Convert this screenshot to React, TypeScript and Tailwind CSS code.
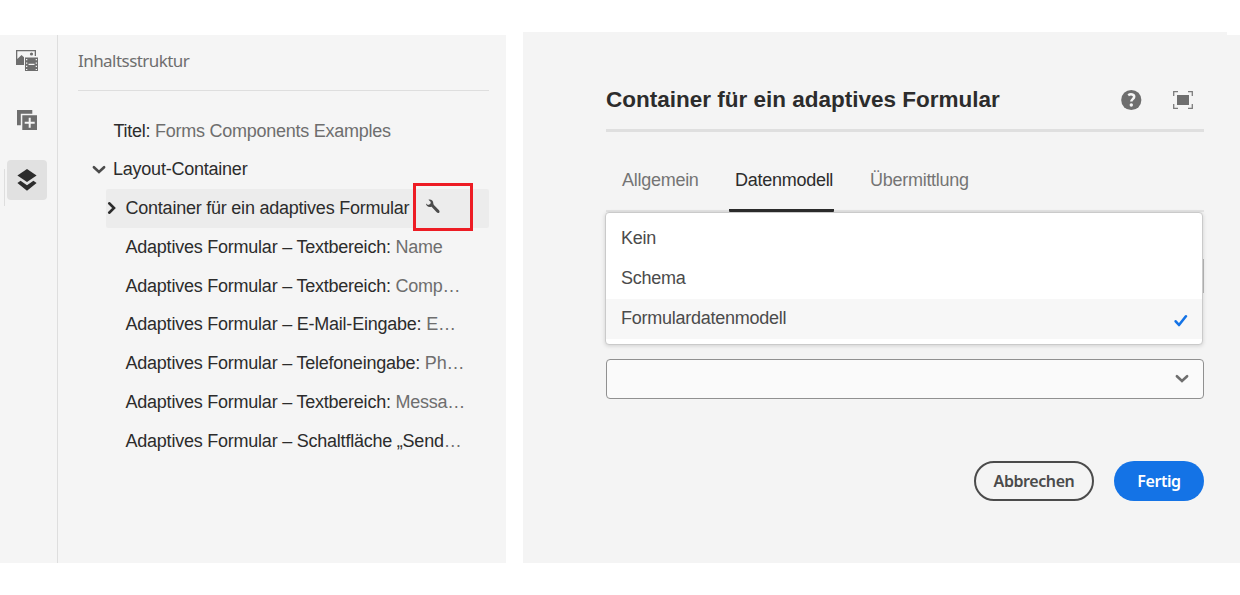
import React from "react";

type TreeItem = { label: string; value?: string; tail?: string };

const fields: TreeItem[] = [
  { label: "Adaptives Formular – Textbereich:", value: "Name" },
  { label: "Adaptives Formular – Textbereich:", value: "Comp…" },
  { label: "Adaptives Formular – E-Mail-Eingabe:", value: "E…" },
  { label: "Adaptives Formular – Telefoneingabe:", value: "Ph…" },
  { label: "Adaptives Formular – Textbereich:", value: "Messa…" },
  { label: "Adaptives Formular – Schaltfläche „Send", tail: "…" },
];

function AssetsIcon() {
  return (
    <svg width="24" height="24" viewBox="0 0 24 24" fill="#6e6e6e">
      <path d="M1 1h20v6h-1.300V2.300H2.300V10l4.200-4L9 8.200V16H1z" />
      <circle cx="16.500" cy="5" r="1.600" />
      <path fillRule="evenodd" d="M10 8.500h13V22H10zM11 10v1.300h1.300V10zm0 3.500v1.300h1.300v-1.300zm0 3.300v1.300h1.300v-1.300zm0 3.100v1.200h1.300v-1.200zM20.700 10v1.300H22V10zm0 3.500v1.300H22v-1.300zm0 3.300v1.300H22v-1.300zm0 3.100v1.200H22v-1.200zM13.500 14.700v1.200h6v-1.200z" />
    </svg>
  );
}

function ComponentsIcon() {
  return (
    <svg width="22" height="22" viewBox="0 0 22 22" fill="#6e6e6e">
      <path d="M1 1h15.300v3.800H4.800v11.500H1z" />
      <path fillRule="evenodd" d="M6.300 6.300H21V21H6.300zM12.700 8.800v4h-4v2h4v4h2v-4h4v-2h-4v-4z" />
    </svg>
  );
}

function LayersIcon() {
  return (
    <svg width="22" height="24" viewBox="0 0 22 24" fill="#2c2c2c">
      <path d="M11 1l9.600 6.500L11 14 1.400 7.500z" />
      <path d="M4.600 12.700L11 17.200l6.400-4.500 3.200 2.400L11 22.800 1.400 15.100z" />
    </svg>
  );
}

function Chevron({ right, color }: { right?: boolean; color: string }) {
  return right ? (
    <svg className="mb-[2px]" width="10" height="14" viewBox="0 0 10 14" fill="none" stroke={color} strokeWidth="2.600" strokeLinecap="round">
      <path d="M2.200 2.300L7 7l-4.800 4.700" />
    </svg>
  ) : (
    <svg width="14" height="10" viewBox="0 0 14 10" fill="none" stroke={color} strokeWidth="2.600" strokeLinecap="round">
      <path d="M1.900 2.200L7 7l5.100-4.800" />
    </svg>
  );
}

function Wrench() {
  return (
    <svg width="16" height="16" viewBox="0 0 16 16" fill="#4b4b4b">
      <path d="M3.500.7C6.200.2 8.400 1.800 8.300 4.300c0 .7.100 1 .6 1.600l4.900 5.100c1 1.200.9 2.200.3 2.700-.7.600-1.600.5-2.400-.4L7 8.300c-.4-.4-.7-.5-1.300-.4C3.100 8.300 1.200 6.800 1 4.400l2 1.500 2.300-.8.500-2z" />
    </svg>
  );
}

function HelpIcon() {
  return (
    <svg width="22" height="22" viewBox="0 0 22 22">
      <circle cx="11.300" cy="11" r="10.100" fill="#6e6e6e" />
      <path d="M8.200 6.200c2.500-1.700 6.100-.9 6 1.600 0 2.200-2.900 2.500-2.900 4.800" fill="none" stroke="#f5f5f5" strokeWidth="2.500" />
      <circle cx="11.300" cy="16" r="1.700" fill="#f5f5f5" />
    </svg>
  );
}

function FullscreenIcon() {
  return (
    <svg width="22" height="20" viewBox="0 0 22 20">
      <path d="M1.700 6V1.700H6M16 1.700h4.300V6M20.300 14v4.300H16M6 18.300H1.700V14" fill="none" stroke="#7c7c7c" strokeWidth="1.300" />
      <path d="M5 5h12v10H5z" fill="#6e6e6e" />
    </svg>
  );
}

function Rail() {
  return (
    <nav className="relative flex w-[58px] shrink-0 flex-col items-center border-r border-[#dedede] pr-[3px]">
      <button className="mt-[14px] flex h-6 w-6"><AssetsIcon /></button>
      <button className="mt-9 flex h-[22px] w-[22px]"><ComponentsIcon /></button>
      <button className="mt-[29px] flex h-10 w-10 items-center justify-center rounded-[4px] bg-[#e1e1e1]"><LayersIcon /></button>
      <span className="absolute left-1 top-[134px] h-[37px] w-px bg-[#dedede]" />
    </nav>
  );
}

function Tree() {
  return (
    <section className="flex w-[448px] flex-col pl-5 pr-[17px]">
      <h2 className="flex h-[56px] items-center border-b border-[#dedede] pb-1 font-['Noto_Sans',sans-serif] text-[17px] tracking-[-0.550px] text-[#6e6e6e]">
        Inhaltsstruktur
      </h2>
      <div className="mt-5 flex flex-col whitespace-pre text-[18px] leading-[39px] tracking-[-0.230px] text-[#2c2c2c]">
        <div className="flex h-[39px] pl-[35.500px] pt-px tracking-[-0.260px]">
          <span>Titel: </span><span className="text-[#6e6e6e]">Forms Components Examples</span>
        </div>
        <div className="flex h-[39px] items-center pl-[14px]">
          <Chevron color="#4b4b4b" /><span className="pl-[7px]">Layout-Container</span>
        </div>
        <div className="relative ml-7 flex h-[39px] items-center rounded-[2px] bg-[#ececec] pl-[1px]">
          <Chevron right color="#2c2c2c" /><span className="w-[301px] pl-[8.500px]">Container für ein adaptives Formular</span><span className="mb-1 ml-[7px]"><Wrench /></span>
          <span className="absolute left-[307px] top-[-6px] h-[48px] w-[60px] border-[3px] border-[#ed1c24]" />
        </div>
        {fields.map((f, i) => (
          <div key={i} className="h-[38.730px] pl-[47.500px]">
            {f.label}
            {f.value && <span className="text-[#6e6e6e]"> {f.value}</span>}
            {f.tail && <span className="text-[#6e6e6e]">{f.tail}</span>}
          </div>
        ))}
      </div>
    </section>
  );
}

function Dialog() {
  return (
    <main className="relative ml-[17px] mt-8 flex h-[531px] w-[717px] flex-col bg-[#f4f4f4] pl-[83px] pr-9">
      <span className="absolute right-0 top-0 h-[3px] w-[13px] bg-white" />
      <header className="flex h-[100px] items-center border-b-[3px] border-[#dfdfdf] pt-[38px]">
        <h1 className="grow text-[22.500px] font-bold leading-[30px] text-[#2c2c2c]">Container für ein adaptives Formular</h1>
        <div className="flex items-center gap-[30px] pr-[10px]"><HelpIcon /><FullscreenIcon /></div>
      </header>
      <div className="mt-[29px] flex h-[51px] border-b-2 border-[#e3e3e3] pl-4 text-[18px] leading-[38px] tracking-[-0.270px] text-[#747474]">
        <span className="w-[107px]">Allgemein</span>
        <span className="h-[51px] w-[105px] rounded-b-[1px] border-b-[3px] border-[#2c2c2c] pl-[6px] text-[#2c2c2c]">Datenmodell</span>
        <span className="ml-9">Übermittlung</span>
      </div>
      <div className="relative h-[147px]">
        <div className="absolute right-0 top-[47px] h-[34px] w-px bg-[#b8b8b8]" />
        <ul className="absolute left-[-1px] top-0 h-[133px] w-[598px] rounded-[4px] border border-[#cacaca] bg-white pt-[6px] text-[18px] leading-[39px] tracking-[-0.260px] text-[#4b4b4b] shadow-[0_1px_4px_rgba(0,0,0,0.150)]">
          <li className="h-10 pl-[15px]">Kein</li>
          <li className="h-10 pl-[15px]">Schema</li>
          <li className="flex h-10 items-start bg-[#f7f7f7] pl-[15px] pr-[14px]">
            <span className="grow">Formulardatenmodell</span>
            <svg className="mt-[15px]" width="14" height="14" viewBox="0 0 14 14" fill="none" stroke="#1473e6" strokeWidth="2.600" strokeLinecap="round" strokeLinejoin="round">
              <path d="M1.700 7.300l3.300 3.700 6.900-8.700" />
            </svg>
          </li>
        </ul>
      </div>
      <div className="flex h-10 shrink-0 items-center justify-end rounded-[4px] border border-[#909090] bg-[#fafafa] pr-[14px]">
        <Chevron color="#6e6e6e" />
      </div>
      <footer className="mt-[62px] flex justify-end gap-5 font-['Noto_Sans',sans-serif] text-[16px] font-semibold leading-none tracking-[-0.420px]">
        <button className="h-10 w-[120px] rounded-full border-2 border-[#4b4b4b] text-[#4b4b4b]">Abbrechen</button>
        <button className="h-10 w-[90px] rounded-full bg-[#1473e6] text-white">Fertig</button>
      </footer>
    </main>
  );
}

export default function App() {
  return (
    <div className="flex h-[595px] w-[1240px] overflow-hidden bg-white font-['Liberation_Sans',Arial,sans-serif]">
      <aside className="mt-[35px] flex h-[528px] w-[506px] shrink-0 bg-[#f5f5f5]">
        <Rail />
        <Tree />
      </aside>
      <Dialog />
    </div>
  );
}
